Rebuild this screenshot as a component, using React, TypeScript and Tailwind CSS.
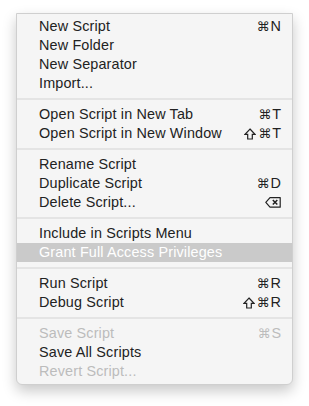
type Item = { label: string; key?: React.ReactNode; disabled?: boolean; active?: boolean };

const DeleteKey = () => (
  <svg width="16" height="11" viewBox="0 0 16 11" fill="none" stroke="#222" strokeWidth="1.2">
    <path d="M5 0.6 H15.2 V10.2 H5 L0.8 5.4 Z" strokeLinejoin="round" />
    <path d="M7.8 3 L12.3 7.6 M12.3 3 L7.8 7.6" strokeWidth="1.5" />
  </svg>
);

const Shift = () => (
  <svg width="12" height="12" viewBox="0 0 12 12" fill="none" stroke="currentColor" strokeWidth="1.2" className="mr-[2px]">
    <path d="M6 1 L11 6.3 H8.3 V11 H3.7 V6.3 H1 Z" strokeLinejoin="miter" />
  </svg>
);

// shortcut text: command glyph from DejaVu, letters in the menu font
const Keys = ({ shift, letter }: { shift?: boolean; letter: string }) => (
  <>
    {shift && <Shift />}
    <span className="font-['DejaVu_Sans'] text-[13px]">⌘</span>
    <span className="ml-[1px]">{letter}</span>
  </>
);

const GROUPS: Item[][] = [
  [
    { label: "New Script", key: <Keys letter="N" /> },
    { label: "New Folder" },
    { label: "New Separator" },
    { label: "Import..." },
  ],
  [
    { label: "Open Script in New Tab", key: <Keys letter="T" /> },
    { label: "Open Script in New Window", key: <Keys shift letter="T" /> },
  ],
  [
    { label: "Rename Script" },
    { label: "Duplicate Script", key: <Keys letter="D" /> },
    { label: "Delete Script...", key: <DeleteKey /> },
  ],
  [
    { label: "Include in Scripts Menu" },
    { label: "Grant Full Access Privileges", active: true },
  ],
  [
    { label: "Run Script", key: <Keys letter="R" /> },
    { label: "Debug Script", key: <Keys shift letter="R" /> },
  ],
  [
    { label: "Save Script", key: <Keys letter="S" />, disabled: true },
    { label: "Save All Scripts" },
    { label: "Revert Script...", disabled: true },
  ],
];

function Row({ item }: { item: Item }) {
  const color = item.active ? "bg-[#cacaca] text-white" : item.disabled ? "text-[#bcbcbc]" : "text-[#222]";
  return (
    <div className={`flex h-[19px] items-center justify-between pl-[22px] pr-[11px] leading-[19px] ${color}`}>
      <span className="tracking-[0.15px]">{item.label}</span>
      {item.key && <span className="flex items-center">{item.key}</span>}
    </div>
  );
}

export default function App() {
  return (
    <div className="min-h-[406px] bg-white pt-[13px] pl-[16px]" style={{ fontFamily: '"Liberation Sans", "DejaVu Sans", Arial, sans-serif' }}>
      <div className="w-[277px] rounded-b-[6px] border border-[#cfcfcf] bg-[#f5f5f5] py-[3px] text-[14.4px] shadow-[0_6px_14px_rgba(0,0,0,0.22)]">
        {GROUPS.map((g, i) => (
          <div key={i}>
            {i > 0 && (
              <div className="flex h-[12px] items-center">
                <div className="h-[2px] w-full bg-[#e4e4e4]" />
              </div>
            )}
            {g.map((it) => (
              <Row key={it.label} item={it} />
            ))}
          </div>
        ))}
      </div>
    </div>
  );
}
